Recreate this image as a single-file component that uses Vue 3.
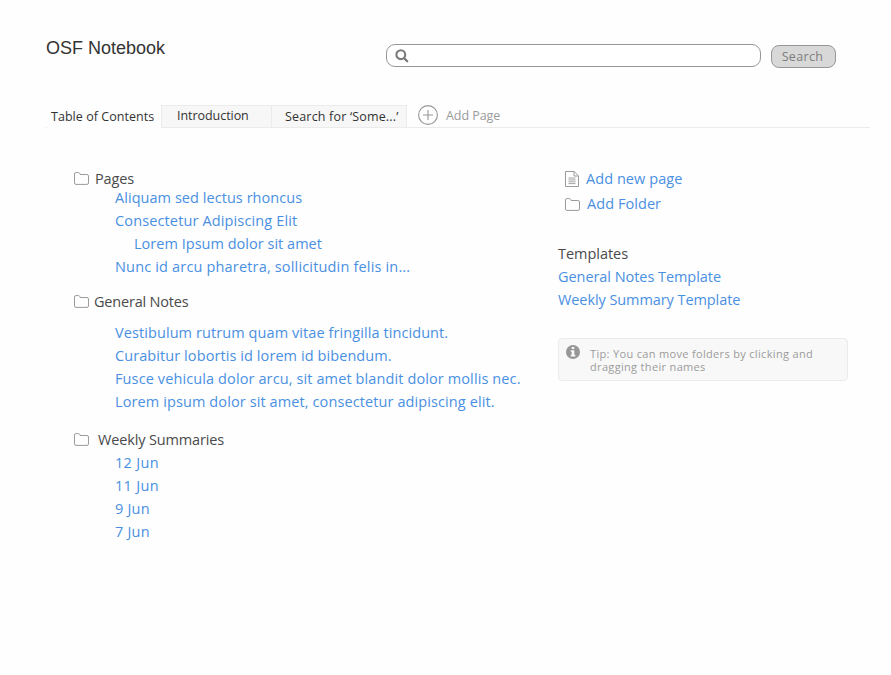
<script setup>
import { h } from 'vue'

const FolderIcon = () =>
  h('svg', { width: 15, height: 13, viewBox: '0 0 15 13', fill: 'none', stroke: '#9b9b9b', 'stroke-width': 1 }, [
    h('path', { d: 'M.5 10.9V2Q.5.6 1.9.6h2.6q.9 0 1.2.8l.4 1.1h6.8q1.6 0 1.6 1.5v6.9q0 1.5-1.5 1.5H2Q.5 12.4.5 10.9Z' }),
  ])

const groups = [
  {
    name: 'Pages', track: -0.15, cls: 'pages',
    links: [
      { text: 'Aliquam sed lectus rhoncus', track: 0.051 },
      { text: 'Consectetur Adipiscing Elit', track: 0.135 },
      { text: 'Lorem Ipsum dolor sit amet', track: 0.02 },
      { text: 'Nunc id arcu pharetra, sollicitudin felis in...', track: 0.17 },
    ],
  },
  {
    name: 'General Notes', track: -0.2, cls: 'general',
    links: [
      { text: 'Vestibulum rutrum quam vitae fringilla tincidunt.', track: 0.085 },
      { text: 'Curabitur lobortis id lorem id bibendum.', track: 0.083 },
      { text: 'Fusce vehicula dolor arcu, sit amet blandit dolor mollis nec.', track: 0.113 },
      { text: 'Lorem ipsum dolor sit amet, consectetur adipiscing elit.', track: 0.105 },
    ],
  },
  {
    name: 'Weekly Summaries', track: -0.148, cls: 'weekly',
    links: [
      { text: '12 Jun', track: 0.32 },
      { text: '11 Jun', track: 0.32 },
      { text: '9 Jun', track: 0.2 },
      { text: '7 Jun', track: 0.2 },
    ],
  },
]
groups[0].links[2].nested = true

const templates = [
  { text: 'General Notes Template', track: -0.055 },
  { text: 'Weekly Summary Template', track: -0.08 },
]
const spacing = (t) => ({ letterSpacing: t + 'px' })
</script>

<template>
  <div class="page">
    <header class="top">
      <h1>OSF Notebook</h1>
      <div class="field">
        <svg width="15" height="15" viewBox="0 0 15 15" fill="none" stroke="#7b7b7b">
          <circle cx="5.8" cy="5.7" r="4.4" stroke-width="2.1" />
          <path d="M9.1 9.1l3.1 3.1" stroke-width="2.3" stroke-linecap="round" />
        </svg>
      </div>
      <button>Search</button>
    </header>

    <nav class="tabs">
      <a class="tab current">Table of Contents</a>
      <a class="tab intro">Introduction</a>
      <a class="tab results">Search for ‘Some...’</a>
      <a class="add">
        <svg width="20" height="20" viewBox="0 0 20 20" fill="none" stroke="#979797">
          <circle cx="10" cy="10" r="9.4" stroke-width="1.1" />
          <path d="M10 5v10M5 10h10" stroke-width="1.1" />
        </svg>
        <span>Add Page</span>
      </a>
    </nav>

    <div class="columns">
      <main>
        <section v-for="g in groups" :key="g.name" :class="g.cls">
          <h2><FolderIcon /><span :style="spacing(g.track)">{{ g.name }}</span></h2>
          <ul>
            <li v-for="l in g.links" :key="l.text" :class="{ nested: l.nested }">
              <a :style="spacing(l.track)">{{ l.text }}</a>
            </li>
          </ul>
        </section>
      </main>

      <aside>
        <div class="action">
          <svg width="14" height="16" viewBox="0 0 14 16" fill="none" stroke="#9b9b9b">
            <path d="M.5.5h8.6l4.4 4.4v10.6H.5ZM9 .5v4.5h4.5" />
            <path d="M3.5 7h7M3.5 8.9h7M3.5 10.8h7M3.5 12.6h7" stroke-width=".9" />
          </svg>
          <a>Add new page</a>
        </div>
        <div class="action folder"><FolderIcon /><a>Add Folder</a></div>

        <h3>Templates</h3>
        <ul>
          <li v-for="t in templates" :key="t.text"><a :style="spacing(t.track)">{{ t.text }}</a></li>
        </ul>

        <div class="tip">
          <svg width="14" height="14" viewBox="0 0 14 14">
            <circle cx="7" cy="7" r="7" fill="#979797" />
            <path d="M5.7 1.9h2.6v2.2H5.7ZM4.7 5.2h3.6v4.6h1v1.6H4.7V9.8h1V6.8h-1Z" fill="#f8f8f8" />
          </svg>
          <p>Tip: You can move folders by clicking and dragging their names</p>
        </div>
      </aside>
    </div>
  </div>
</template>

<style>
body { background: #fefefe; }
</style>

<style scoped>
.page {
  box-sizing: border-box;
  width: 891px;
  height: 675px;
  overflow: hidden;
  padding-top: 36px;
  font: 14.5px/23px "Open Sans", "Noto Sans", sans-serif;
  color: #4a4a4a;
}
svg { display: block; flex: none; }
h1, h2, h3, p, ul { margin: 0; padding: 0; font-weight: 400; list-style: none; }
a { white-space: nowrap; }

.top { display: flex; align-items: flex-start; height: 69px; padding-left: 46px; }
h1 { width: 340px; font: 18px/24px "Liberation Sans", Arial, sans-serif; color: #333; }
.field {
  box-sizing: border-box;
  width: 375px;
  height: 23px;
  margin-top: 8px;
  padding: 4px 8px;
  border: 1px solid #979797;
  border-radius: 9px;
  background: #fff;
}
button {
  box-sizing: border-box;
  width: 65px;
  height: 23px;
  margin: 9px 0 0 10px;
  padding: 0 2px 0 0;
  border: 1px solid #979797;
  border-radius: 8px;
  background: #d8d8d8;
  color: #7d7d7d;
  font: 12.5px/21px "Open Sans", sans-serif;
  letter-spacing: .35px;
}

.tabs {
  display: flex;
  box-sizing: border-box;
  width: 709px;
  height: 23px;
  margin-left: 161px;
  border-bottom: 1px solid #ebebeb;
  font-size: 12.5px;
  line-height: 22px;
}
.tab { box-sizing: border-box; color: #333; }
.current {
  width: 115px;
  height: 23px;
  margin-left: -115px;
  padding: 1px 0 0 5px;
  letter-spacing: .044px;
  background: linear-gradient(#e8e8e8, #e8e8e8) no-repeat left bottom / 1px 1px;
}
.intro, .results { border: 1px solid #ebebeb; border-bottom: 0; background: #f7f7f7; line-height: 20px; }
.intro { width: 111px; padding-left: 15px; letter-spacing: -.05px; }
.results { width: 136px; margin-left: -1px; padding: 1px 0 0 13px; letter-spacing: .18px; }
.add { display: flex; gap: 8px; margin-left: 11px; color: #9b9b9b; letter-spacing: -.06px; line-height: 21px; }

.columns { display: flex; padding: 39px 0 0 74px; }
main { width: 484px; }
h2 { display: flex; align-items: center; gap: 5px; font-size: 14.5px; line-height: 23px; }
main ul { padding-left: 41px; }
li { height: 23px; }
li a, .action a { color: #4a90e2; }
.nested { padding-left: 19px; }
.pages h2 { height: 19px; padding-top: 2px; margin-bottom: -2px; gap: 6px; }
.general { margin-top: 12px; }
.general ul { margin-top: 8px; }
.weekly { margin-top: 15px; }
.weekly h2 { gap: 9px; }

aside { width: 290px; }
.action { display: flex; align-items: center; gap: 7px; height: 25px; margin-top: -1px; padding-left: 7px; letter-spacing: .06px; }
.action.folder { margin-top: 0; }
.action.folder svg { margin-top: 2px; }
h3 { margin-top: 26px; font-size: 14.5px; line-height: 23px; letter-spacing: -.028px; }
.tip {
  box-sizing: border-box;
  display: flex;
  gap: 10px;
  height: 43px;
  margin-top: 27px;
  padding: 6px 7px;
  border: 1px solid #ebebeb;
  border-radius: 4px;
  background: #f8f8f8;
  color: #9b9b9b;
  font-size: 11px;
  line-height: 13px;
}
.tip p { margin-top: 2px; letter-spacing: .33px; }
</style>
